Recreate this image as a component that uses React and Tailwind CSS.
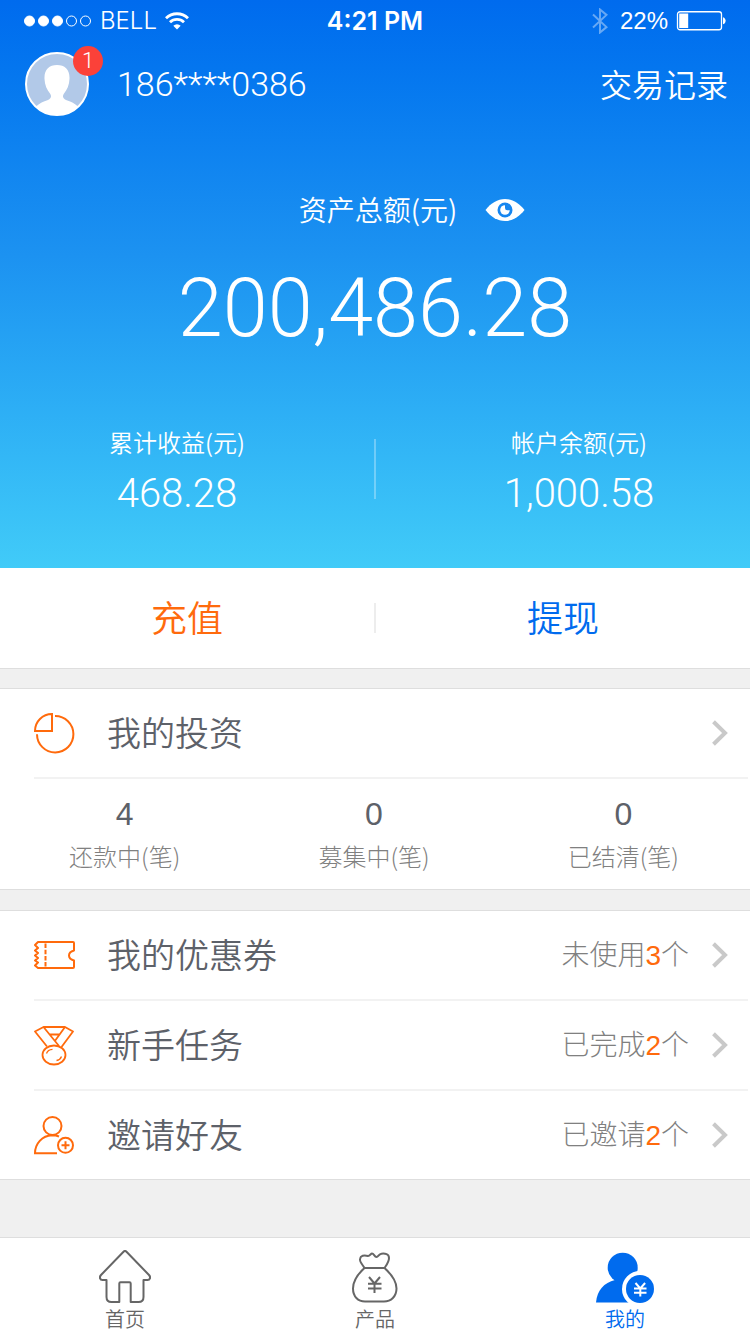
import React from "react";

const BASE = "font-['Roboto','Noto_Sans_CJK_SC',sans-serif] font-[350]";
const LABEL = "font-['Noto_Sans_CJK_SC',sans-serif]";

function StatusBar() {
  return (
    <div className="grid h-[42px] grid-cols-3 items-center px-6 font-['Liberation_Sans',sans-serif] text-2xl leading-10 text-white">
      <div className="flex items-center">
        <svg className="h-3 w-[68px]" viewBox="0 0 68 12" fill="#fff" stroke="#fff">
          <circle cx="5.5" cy="6" r="5" />
          <circle cx="19.5" cy="6" r="5" />
          <circle cx="33.5" cy="6" r="5" />
          <circle cx="47.5" cy="6" r="5" fill="none" />
          <circle cx="61.5" cy="6" r="5" fill="none" />
        </svg>
        <span className="ml-2 font-['Inter',sans-serif] font-light">BELL</span>
        <svg className="ml-2 h-[18px] w-6" viewBox="0 0 24 18" fill="none" stroke="#fff" strokeWidth="2.8">
          <path d="M1 6.3a15.6 15.6 0 0 1 22 0" />
          <path d="M5 10.3a9.9 9.9 0 0 1 14 0" />
          <path d="M8.3 13.8a5.2 5.2 0 0 1 7.4 0L12 17.6z" fill="#fff" stroke="none" />
        </svg>
      </div>
      <div className="text-center font-['Inter',sans-serif] text-[25px] font-semibold">4:21 PM</div>
      <div className="flex items-center justify-end">
        <svg className="h-[26px] w-4 opacity-40" viewBox="0 0 16 26" fill="none" stroke="#fff" strokeWidth="2">
          <path d="M1 6.5l13.5 12.6L8 24.5V1.5l6.500 5.400L1 19.500" />
        </svg>
        <span className="ml-3">22%</span>
        <svg className="ml-2 h-5 w-[50px]" viewBox="0 0 50 20">
          <rect x="1.500" y=".75" width="44" height="18" rx="2.500" fill="none" stroke="#fff" strokeWidth="1.300" />
          <rect x="3.200" y="2.500" width="9" height="14.500" fill="#fff" />
          <path d="M47 6.300c3.500 1 3.500 6 0 7z" fill="#fff" />
        </svg>
      </div>
    </div>
  );
}

function Avatar() {
  return (
    <a href="#profile" className="relative block size-16" aria-label="1">
      <svg className="size-16" viewBox="0 0 64 64">
        <defs>
          <clipPath id="face">
            <circle cx="32" cy="32" r="31" />
          </clipPath>
        </defs>
        <circle cx="32" cy="32" r="31" fill="#b2c9e8" />
        <path
          clipPath="url(#face)"
          fill="#fff"
          d="M32 13c-8 0-13 5-12.500 14 .2 6 2.500 11 5.500 14.500 2 3 1 5-2 6.500-5 1.800-8 3-12 6.500V64h42v-9.500c-4-3.500-7-4.700-12-6.500-3-1.500-4-3.500-2-6.500 3-3.500 5.300-8.500 5.500-14.500C45 18 40 13 32 13z"
        />
        <circle cx="32" cy="32" r="31" fill="none" stroke="#fff" strokeWidth="2" />
      </svg>
      <span className="absolute -top-1.5 left-12 flex size-[30px] items-center justify-center rounded-full bg-[#fb4139] text-[22px] leading-none text-white">
        1
      </span>
    </a>
  );
}

function Chevron() {
  return (
    <svg className="h-[26px] w-4" viewBox="0 0 16 26" fill="none" stroke="#c9c9c9" strokeWidth="4">
      <path d="M1.500 1.800L13 13 1.500 24.200" />
    </svg>
  );
}

const iconProps = { fill: "none", stroke: "#ff6a0c", strokeWidth: 2 };

function PieIcon() {
  return (
    <svg className="size-[42px]" viewBox="0 0 42 42" {...iconProps}>
      <path d="M18 1V18H1C1 8.500 8.500 1 18 1z" />
      <path d="M21 3A18.200 18.200 0 1 1 3 21.200" />
    </svg>
  );
}

function TicketIcon() {
  return (
    <svg className="size-[42px]" viewBox="0 -6 42 42" {...iconProps} strokeLinejoin="round">
      <path d="M4 1H39a1 1 0 0 1 1 1V9.500C36.500 10.500 35 12.200 35 14.500s1.500 4 5 5V26a1 1 0 0 1-1 1H4L1 24.500 4 21.500 1 19.500 4 17 1 14.500 4 12 1 9.500 4 7 1 4z" />
      <path d="M11.500 2.500V26" strokeDasharray="4.500 1.700" />
    </svg>
  );
}

function MedalIcon() {
  return (
    <svg className="size-[42px]" viewBox="0 -1 42 42" {...iconProps} strokeWidth="1.800" strokeLinejoin="round">
      <path d="M13 20.500L1 5.500 9.500 1H31l8 4.500-11.500 15.500" />
      <path d="M9.500 1L25 20M31 1L20.500 15.500M15.500 8.500H25.500" />
      <ellipse cx="20" cy="29" rx="11.500" ry="9.500" />
      <path d="M12.500 27.500c.8-2.500 3-4 6-4.200M27.500 30.500c-.8 2.300-2.500 3.600-5 4" strokeWidth="1.300" />
    </svg>
  );
}

function InviteIcon() {
  return (
    <svg className="size-[42px]" viewBox="0 -1 42 42" {...iconProps}>
      <circle cx="18.500" cy="10" r="9" />
      <path d="M23 37.200H1C1 28 8 19.500 18 19.200c2.700 0 5 .4 7 1.300" />
      <circle cx="31.500" cy="29.300" r="7.500" />
      <path d="M27.500 29.300h8M31.500 25.300v8" />
    </svg>
  );
}

function Row({ icon, title, status, count }) {
  return (
    <a href="#detail" className="flex h-[88px] items-center pr-[22px]">
      <span className="flex flex-1 items-center pt-0.5">
        {icon}
        <span className="ml-[31px] flex-1 text-[34px] text-[#5d6169]">{title}</span>
        {status && (
          <span className="mr-[23px] text-[28px] font-light text-[#808080]">
            {status}
            <span className="font-['Liberation_Sans',sans-serif] text-[#ff6a0c]">{count}</span>个
          </span>
        )}
      </span>
      <Chevron />
    </a>
  );
}

function HomeIcon() {
  return (
    <svg className="h-[54px] w-[52px]" viewBox="0 0 52 54" fill="none" stroke="#666" strokeWidth="2" strokeLinejoin="round">
      <path d="M24.500 1.700q1.500-1.400 3 0L50 25c2 2.200 1 5-1.500 5H44.500V47c0 3.500-1.500 5-5 5H31.700V33.500c0-.8-.4-1.200-1.200-1.200h-9c-.8 0-1.200.4-1.200 1.200V52h-7.800c-3.500 0-5-1.500-5-5V30H3.500C1 30 0 27.200 2 25z" />
    </svg>
  );
}

function BagIcon() {
  return (
    <svg className="h-[54px] w-[46px]" viewBox="0 -2.500 46 54" fill="none" stroke="#666" strokeWidth="2" strokeLinejoin="round">
      <path d="M12.500 15.500C10.500 12 7.500 9.500 8 6.500c.5-3.500 4-4 8-3 2-.1 2.800-2.500 4-2.500 2 0 2.300 3.500 4.500 3.500 2 0 2-3 5-3.300 3.500-.4 7.500.3 7.500 4.300 0 4-2.500 7-4.500 10z" />
      <path d="M12.500 15.500C7 20.500 1 28 1 36c0 8 5 13 12 13h19c7 0 12.500-5 12.500-13 0-8-6.500-15.500-12-20.500" />
      <path d="M17 24.500l5.500 6.500 5.500-6.500M16 31.200h13.500M16 36h13.500M22.500 31v9.500" />
    </svg>
  );
}

function MineIcon() {
  return (
    <svg className="h-[54px] w-[58px]" viewBox="0 -2.500 58 54" fill="#006bee">
      <circle cx="26.700" cy="15.200" r="15" />
      <path d="M0 50C1 38 8 30 19 27.500L38 24V50z" />
      <circle cx="44" cy="36.500" r="18" fill="#fff" />
      <circle cx="44" cy="36.500" r="14" />
      <path d="M39.500 30.500l4.800 5.500 4.800-5.500M38 36h12.500M38 40.300h12.500M44.300 36v8" fill="none" stroke="#fff" strokeWidth="2" />
    </svg>
  );
}

function Tab({ icon, label, active }) {
  return (
    <a
      href="#tab"
      aria-current={active ? "page" : undefined}
      className={`flex flex-col items-center pt-3 text-xl leading-8 ${active ? "text-[#006bee]" : "text-[#666]"}`}
    >
      {icon}
      {label}
    </a>
  );
}

export default function App() {
  return (
    <div className={`flex min-h-screen flex-col bg-[#f0f0f0] ${BASE}`}>
      <header className="bg-linear-to-b from-[#006bee] via-[#1c92f1] via-45% to-[#41cbf8] text-white">
        <StatusBar />
        <div className="flex items-center pt-2.5 pr-[22px] pl-[25px]">
          <Avatar />
          <span className="ml-7 flex-1 text-[34px] leading-[62px]">186****0386</span>
          <a href="#records" className="pt-1 text-[32px] leading-[60px]">交易记录</a>
        </div>
        <div className="mt-[73px] flex items-center justify-center pl-[74px]">
          <span className={`text-[28px] leading-10 ${LABEL}`}>资产总额(元)</span>
          <button type="button" className="mt-0.5 ml-7" aria-label="资产总额">
            <svg className="h-6 w-10" viewBox="0 0 40 24">
              <path d="M.5 12C6 5 12.500 1 20 1s14 4 19.500 11C34 19 27.500 23 20 23S6 19 .5 12z" fill="#fff" />
              <circle cx="20" cy="12" r="7.500" fill="#1686f0" />
              <circle cx="20" cy="12" r="4.800" fill="#fff" />
              <path d="M20 6.500v3.500a2.200 2.200 0 0 0 2.200 2.200h3.500A6 6 0 0 0 20 6.500z" fill="#1686f0" />
            </svg>
          </button>
        </div>
        <div className="mt-[30px] text-center text-[81px] leading-[100px] font-light">200,486.28</div>
        <div className="mt-[65px] grid grid-cols-[1fr_2px_1fr] items-start pb-[49px]">
          <dl className="pr-5 text-center">
            <dt className={`text-2xl leading-9 ${LABEL}`}>累计收益(元)</dt>
            <dd className="mt-2 text-[40px] leading-[51px] font-light">468.28</dd>
          </dl>
          <div className="mt-[15px] h-[60px] bg-white/30" />
          <dl className="pl-8 text-center">
            <dt className={`text-2xl leading-9 ${LABEL}`}>帐户余额(元)</dt>
            <dd className="mt-2 text-[40px] leading-[51px] font-light">1,000.58</dd>
          </dl>
        </div>
      </header>

      <main>
        <div className="flex h-[101px] items-center border-b border-[#dedede] bg-white text-4xl">
          <button type="button" className="h-full flex-1 pt-1 text-[#ff6a0c]">充值</button>
          <div className="h-[30px] w-0.5 bg-[#ededed]" />
          <button type="button" className="h-full flex-1 pt-1 text-[#006bee]">提现</button>
        </div>

        <section className="mt-[19px] border-y border-[#dedede] bg-white">
          <div className="pl-[34px]">
            <Row icon={<PieIcon />} title="我的投资" />
            <div className="mr-0.5 h-0.5 bg-[#f2f2f2]" />
          </div>
          <div className="grid h-[110px] grid-cols-3 content-center pr-0.5 text-center">
            {[
              ["4", "还款中(笔)"],
              ["0", "募集中(笔)"],
              ["0", "已结清(笔)"],
            ].map(([value, label]) => (
              <div key={label}>
                <div className="font-['Liberation_Sans',sans-serif] text-[32px] leading-[44px] text-[#5d6169]">{value}</div>
                <div className={`text-2xl leading-10 font-light text-[#808080] ${LABEL}`}>{label}</div>
              </div>
            ))}
          </div>
        </section>

        <section className="mt-5 border-y border-[#dedede] bg-white pl-[34px]">
          <Row icon={<TicketIcon />} title="我的优惠券" status="未使用" count="3" />
          <div className="mr-0.5 h-0.5 bg-[#f2f2f2]" />
          <Row icon={<MedalIcon />} title="新手任务" status="已完成" count="2" />
          <div className="mr-0.5 h-0.5 bg-[#f2f2f2]" />
          <Row icon={<InviteIcon />} title="邀请好友" status="已邀请" count="2" />
        </section>
      </main>

      <nav className="mt-auto grid h-[97px] grid-cols-3 border-t border-[#dedede] bg-white">
        <Tab icon={<HomeIcon />} label="首页" />
        <Tab icon={<BagIcon />} label="产品" />
        <Tab icon={<MineIcon />} label="我的" active />
      </nav>
    </div>
  );
}
